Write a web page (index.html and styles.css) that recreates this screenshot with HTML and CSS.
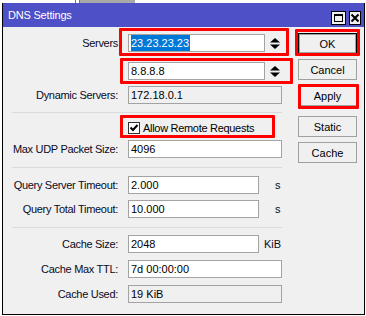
FILE: index.html
```html
<!DOCTYPE html>
<html>
<head>
<meta charset="utf-8">
<link rel="stylesheet" href="styles.css">
</head>
<body>
<div class="bgtop"><span class="bg-a"></span><span class="bg-b"></span><span class="bg-c"></span></div>
<div class="win">
  <div class="titlebar">
    <span class="title">DNS Settings</span>
    <span class="tbtns">
      <span class="tb tb-max"><svg width="13" height="12" viewBox="0 0 13 12"><rect x="2.5" y="2.5" width="8" height="7" fill="none" stroke="#000" stroke-width="1"/><rect x="2" y="2" width="9" height="2" fill="#000"/></svg></span>
      <span class="tb tb-close"><svg width="10" height="12" viewBox="0 0 10 12"><path d="M1.5 2.5 L8.5 9.5 M8.5 2.5 L1.5 9.5" stroke="#000" stroke-width="2"/></svg></span>
    </span>
  </div>
  <div class="body">
    <div class="form">
      <div class="row">
        <span class="lbl">Servers</span>
        <span class="grp hl hl-s1">
          <span class="fld fld-spin"><span class="sel">23.23.23.23</span></span>
          <span class="spin"><svg width="10" height="11" viewBox="0 0 10 11"><polygon points="0,4.5 5,0 10,4.5" fill="#000"/><polygon points="0,6.5 10,6.5 5,11" fill="#000"/></svg></span>
        </span>
      </div>
      <div class="row m10">
        <span class="lbl"></span>
        <span class="grp hl hl-s2">
          <span class="fld fld-spin">8.8.8.8</span>
          <span class="spin"><svg width="10" height="11" viewBox="0 0 10 11"><polygon points="0,4.5 5,0 10,4.5" fill="#000"/><polygon points="0,6.5 10,6.5 5,11" fill="#000"/></svg></span>
        </span>
      </div>
      <div class="row m6">
        <span class="lbl">Dynamic Servers:</span>
        <span class="fld ro">172.18.0.1</span>
      </div>
      <div class="sep m8"></div>
      <div class="row m6">
        <span class="lbl"></span>
        <span class="chk hl hl-chk">
          <span class="box"><svg width="10" height="10" viewBox="0 0 10 10"><path d="M1.5 4.5 L4 7 L8.5 2" fill="none" stroke="#000" stroke-width="2"/></svg></span>
          <span class="chk-t">Allow Remote Requests</span>
        </span>
      </div>
      <div class="row m3">
        <span class="lbl">Max UDP Packet Size:</span>
        <span class="fld">4096</span>
      </div>
      <div class="sep m9"></div>
      <div class="row m8">
        <span class="lbl">Query Server Timeout:</span>
        <span class="fld short">2.000</span>
        <span class="unit u-s">s</span>
      </div>
      <div class="row m6">
        <span class="lbl">Query Total Timeout:</span>
        <span class="fld short">10.000</span>
        <span class="unit u-s">s</span>
      </div>
      <div class="sep m9"></div>
      <div class="row m7">
        <span class="lbl">Cache Size:</span>
        <span class="fld short">2048</span>
        <span class="unit u-k">KiB</span>
      </div>
      <div class="row m7">
        <span class="lbl">Cache Max TTL:</span>
        <span class="fld">7d 00:00:00</span>
      </div>
      <div class="row m7">
        <span class="lbl">Cache Used:</span>
        <span class="fld ro">19 KiB</span>
      </div>
    </div>
    <div class="btns">
      <span class="btn btn-def hl hl-ok">OK</span>
      <span class="btn m5">Cancel</span>
      <span class="btn m5 hl hl-apply">Apply</span>
      <span class="btn m10">Static</span>
      <span class="btn m5">Cache</span>
    </div>
  </div>
</div>
</body>
</html>
```
FILE: styles.css
```css
* { box-sizing: border-box; }
html, body { margin: 0; padding: 0; }
body {
  width: 366px;
  height: 316px;
  overflow: hidden;
  background: #fff;
  font-family: "Liberation Sans", Arial, sans-serif;
  font-size: 11px;
  color: #000;
}
.bgtop { height: 3px; display: flex; }
.bg-a { width: 75px; }
.bg-b { width: 5px; border-left: 1px solid #777; border-right: 1px solid #777; }
.bg-c { width: 55px; background: #a9a9a9; }

.win {
  margin-left: 2px;
  width: 363px;
  height: 312px;
  border: 1px solid #000;
  border-top: 0;
  background: #f0f0f0;
}
.titlebar {
  height: 24px;
  background: #4d50c6;
  display: flex;
  align-items: center;
  padding-left: 5px;
  color: #fff;
}
.title { flex: 1; letter-spacing: -0.2px; }
.tbtns { display: flex; gap: 3px; margin-right: 3px; align-self: flex-end; margin-bottom: 2px; }
.tb {
  height: 14px;
  background: #f0f0f0;
  border: 1px solid #000;
  display: flex;
  align-items: center;
  justify-content: center;
}
.tb-max { width: 15px; }
.tb-close { width: 12px; }

.body { display: flex; }
.form { width: 295px; flex: 0 0 295px; padding-top: 7px; }
.btns { width: 59px; padding-top: 6px; display: flex; flex-direction: column; }

.row { display: flex; align-items: center; height: 18px; }
.lbl {
  width: 115px;
  flex: 0 0 115px;
  margin-right: 10px;
  text-align: right;
  white-space: nowrap;
  letter-spacing: -0.3px;
  color: #0a0a1e;
}
.fld {
  display: block;
  height: 18px;
  width: 154px;
  border: 1px solid #a3a3a3;
  background: #fff;
  padding-left: 2px;
  line-height: 16px;
  white-space: nowrap;
}
.fld.short { width: 131px; }
.fld.ro { background: #f0f0f0; }
.fld-spin { width: 137px; }
.sel {
  display: inline-block;
  background: #0078d7;
  color: #fff;
  line-height: 16px;
  padding-right: 1px;
}
.grp { display: flex; align-items: center; }
.spin { width: 18px; display: flex; justify-content: center; padding-left: 1px; }
.unit { color: #0a0a1e; }
.u-s { margin-left: 16px; }
.u-k { margin-left: 5px; }

.sep { height: 1px; margin-left: 9px; width: 270px; background: #dadada; }

.chk { display: flex; align-items: center; height: 18px; }
.box {
  width: 12px;
  height: 12px;
  border: 1px solid #333;
  background: #fff;
  display: flex;
  align-items: center;
  justify-content: center;
}
.chk-t { margin-left: 3px; letter-spacing: -0.3px; }

.btn {
  height: 21px;
  border: 1px solid #a0a0a0;
  background: #f0f0f0;
  display: flex;
  align-items: center;
  justify-content: center;
}
.btn-def { border-color: #000; box-shadow: inset 0 0 0 1px #a0a0a0; }

.m3 { margin-top: 3px; }
.m5 { margin-top: 5px; }
.m6 { margin-top: 6px; }
.m7 { margin-top: 7px; }
.m8 { margin-top: 8px; }
.m9 { margin-top: 9px; }
.m10 { margin-top: 10px; }

.hl { position: relative; }
.hl::after {
  content: "";
  position: absolute;
  border: 3px solid #ff0000;
  border-radius: 1px;
  pointer-events: none;
}
.hl-s1::after { left: -9px; top: -6px; right: -6px; bottom: -4px; }
.hl-s2::after { left: -8px; top: -4px; right: -10px; bottom: -4px; }
.hl-chk::after { left: -8px; top: -4px; width: 149px; bottom: -1px; }
.hl-ok::after { left: -4px; right: -4px; top: -5px; bottom: -3px; }
.hl-apply::after { left: -1px; right: -3px; top: -2px; bottom: -4px; }
```
